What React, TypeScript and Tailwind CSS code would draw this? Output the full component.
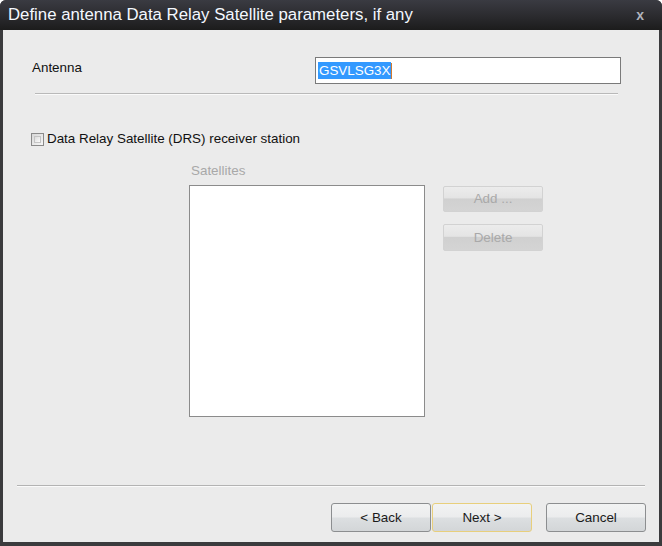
import React from "react";

const btn =
  "h-[29px] w-[100px] rounded-[3px] border text-[13.4px] text-[#1a1a1a] flex items-center justify-center pt-[2px] bg-[linear-gradient(to_bottom,#f2f3f3_0%,#ebeced_48%,#dcdfe1_52%,#d3d6d8_100%)]";
const dis =
  "w-[100px] rounded-[2px] border border-[#d2d2d2] text-[13.4px] text-[#a9a9a9] flex items-center justify-center bg-[linear-gradient(to_bottom,#ececec_0%,#e4e4e4_45%,#d0d0d0_50%,#d4d4d4_100%)]";

export default function App() {
  return (
    <div
      className="w-[662px] h-[546px] flex flex-col bg-[#3b3b3d] rounded-t-[6px] overflow-hidden"
      style={{ fontFamily: '"Liberation Sans", Arial, sans-serif' }}
    >
      <div className="h-[30px] flex items-center justify-between pl-[8px] pr-[18px] bg-[linear-gradient(to_bottom,#3a3b42_0%,#2c2c30_50%,#1c1c1c_100%)]">
        <span className="text-[16.8px] text-[#f4f8ff]">
          Define antenna Data Relay Satellite parameters, if any
        </span>
        <span className="text-[14px] font-bold text-[#b0b4be]">x</span>
      </div>
      <div className="flex-1 mx-[3px] mb-[4px] bg-[#ebebeb] flex flex-col text-[13.4px] text-[#111]">
        <div className="flex items-start pl-[29px] pt-[27px]">
          <div className="w-[283px] pt-[1px]">Antenna</div>
          <div className="w-[306px] h-[27px] bg-white border border-[#7a7a7a] flex items-center pl-[2px]">
            <span className="bg-[#3399ff] text-white leading-[17px] px-[1px]">GSVLSG3X</span>
            <span className="w-[1px] h-[16px] bg-[#d07a30]" />
          </div>
        </div>
        <div className="ml-[32px] mt-[9px] w-[583px] h-[1px] bg-[#b9b9b9]" />
        <div className="ml-[32px] w-[583px] h-[1px] bg-[#fafafa]" />
        <div className="flex items-center pl-[28px] mt-[34px] gap-[3px]">
          <div className="w-[13px] h-[13px] border border-[#8a8a8a] bg-[linear-gradient(135deg,#d8d8d8,#f6f6f6)] p-[2px]">
            <div className="w-full h-full border border-[#c4c4c4] bg-[linear-gradient(135deg,#dcdcdc,#fbfbfb)]" />
          </div>
          <span>Data Relay Satellite (DRS) receiver station</span>
        </div>
        <div className="flex pl-[186px] mt-[14px]">
          <div className="flex flex-col">
            <div className="pl-[2px] text-[#a8a8a8] leading-[15px]">Satellites</div>
            <div className="mt-[7px] w-[236px] h-[232px] bg-white border border-[#8b8b8b]" />
          </div>
          <div className="flex flex-col ml-[18px] pt-[23px] gap-[12px]">
            <div className={dis + " h-[26px]"}>Add ...</div>
            <div className={dis + " h-[27px]"}>Delete</div>
          </div>
        </div>
        <div className="flex-1" />
        <div className="ml-[14px] w-[628px] h-[1px] bg-[#b3b3b3]" />
        <div className="ml-[14px] w-[628px] h-[1px] bg-[#fafafa]" />
        <div className="flex pl-[328px] mt-[16px] mb-[10px]">
          <div className={btn + " border-[#8c8e90]"}>&lt; Back</div>
          <div className={btn + " w-[99px] ml-[1px] border-[#e8cf7c]"}>Next &gt;</div>
          <div className={btn + " ml-[14px] border-[#8c8e90]"}>Cancel</div>
        </div>
      </div>
    </div>
  );
}
